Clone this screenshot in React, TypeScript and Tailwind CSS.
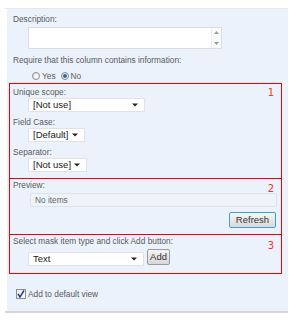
import React from 'react'

// small dropdown box like an old SharePoint select
function Select({ value, width }: { value: string; width: string }) {
  return (
    <div
      className={`${width} h-[14px] bg-white border border-[#e2e2e2] flex items-center justify-between pl-[4px] pr-[6px] text-[9.5px] text-[#222]`}
    >
      <span>{value}</span>
      <svg width="6" height="4" viewBox="0 0 6 4">
        <path d="M0 0.5 L6 0.5 L3 3.5 Z" fill="#222" />
      </svg>
    </div>
  )
}

function Radio({ checked }: { checked?: boolean }) {
  return (
    <span className="w-[8px] h-[8px] rounded-full border border-[#8a8a8a] bg-gradient-to-br from-[#e6e6e6] to-white flex items-center justify-center">
      {checked && <span className="w-[4px] h-[4px] rounded-full bg-[#1c6fb5]" />}
    </span>
  )
}

export default function App() {
  return (
    <div className="w-[306px] h-[323px] bg-white pt-[8px] font-['Liberation_Sans',Arial,sans-serif] text-[8.3px] leading-[10px] text-[#5a5a5a]">
      <div className="ml-[5px] w-[283px] border-t border-[#dfe7f1] border-b-2 border-b-[#d6d6d6]">
        <div className="ml-[2px] bg-[#ebf2fc] pl-[6px] pt-[5px] pb-[12px]">
          <div>Description:</div>

          {/* description textarea with scrollbar */}
          <div className="ml-[15px] mt-[3px] w-[194px] h-[22px] bg-white border border-[#dcdcdc] flex justify-end">
            <div className="w-[10px] h-full border-l border-[#ececec] bg-[#fafafa] flex flex-col justify-between items-center py-[3px]">
              <svg width="5" height="3" viewBox="0 0 5 3">
                <path d="M0 3 L5 3 L2.5 0 Z" fill="#9a9a9a" />
              </svg>
              <svg width="5" height="3" viewBox="0 0 5 3">
                <path d="M0 0 L5 0 L2.5 3 Z" fill="#9a9a9a" />
              </svg>
            </div>
          </div>

          <div className="mt-[6px]">Require that this column contains information:</div>

          <div className="mt-[6px] ml-[19px] flex items-center">
            <Radio />
            <span className="ml-[2px]">Yes</span>
            <span className="ml-[5px]" />
            <Radio checked />
            <span className="ml-[2px]">No</span>
          </div>

          {/* annotated sections */}
          <div className="-ml-[4px] mt-[2px] w-[273px] border border-[#f00000]">
            <div className="relative pl-[3px] pt-[3px] pb-[6px]">
              <span className="absolute right-[7px] top-[4px] text-[10px] text-[#f04020] font-['DejaVu_Sans',sans-serif]">1</span>
              <div>Unique scope:</div>
              <div className="ml-[15px] mt-[1px]">
                <Select value="[Not use]" width="w-[117px]" />
              </div>
              <div className="mt-[5px]">Field Case:</div>
              <div className="ml-[15px] mt-[1px]">
                <Select value="[Default]" width="w-[57px]" />
              </div>
              <div className="mt-[5px]">Separator:</div>
              <div className="ml-[15px] mt-[1px]">
                <Select value="[Not use]" width="w-[59px]" />
              </div>
            </div>

            <div className="relative border-t border-[#f00000] pl-[3px] pt-[1px] pb-[6px]">
              <span className="absolute right-[7px] top-[5px] text-[10px] text-[#f03030] font-['DejaVu_Sans',sans-serif]">2</span>
              <div>Preview:</div>
              <div className="ml-[17px] mr-[4px] mt-[3px] h-[14px] bg-[#eef3fa] border border-[#dde3ea] rounded-[2px] pl-[4px] flex items-center text-[#666]">
                No items
              </div>
              <div className="mt-[5px] mr-[5px] flex justify-end">
                <button className="w-[47px] h-[16px] rounded-[2px] border border-[#3c9fd6] bg-gradient-to-b from-[#f6f6f6] to-[#dadada] text-[9.5px] text-[#333] leading-none">
                  Refresh
                </button>
              </div>
            </div>

            <div className="relative border-t border-[#f00000] pl-[3px] pt-[1px] pb-[8px]">
              <span className="absolute right-[7px] top-[6px] text-[10px] text-[#f03030] font-['DejaVu_Sans',sans-serif]">3</span>
              <div>Select mask item type and click Add button:</div>
              <div className="ml-[15px] mt-[3px] flex items-end">
                <div className="mb-[-1px]">
                  <Select value="Text" width="w-[116px]" />
                </div>
                <button className="ml-[3px] w-[23px] h-[16px] rounded-[2px] border border-[#9a9a9a] bg-gradient-to-b from-[#f4f4f4] to-[#d8d8d8] text-[9.5px] text-[#333] leading-none">
                  Add
                </button>
              </div>
            </div>
          </div>

          <div className="mt-[15px] ml-[3px] flex items-center">
            <span className="w-[10px] h-[10px] border border-[#8f8f8f] bg-gradient-to-br from-[#e8e8e8] to-white flex items-center justify-center">
              <svg width="8" height="8" viewBox="0 0 8 8">
                <path d="M1 4 L3 7 L7 0.5" stroke="#2a3f8f" strokeWidth="1.5" fill="none" />
              </svg>
            </span>
            <span className="ml-[2px]">Add to default view</span>
          </div>
        </div>
      </div>
    </div>
  )
}
